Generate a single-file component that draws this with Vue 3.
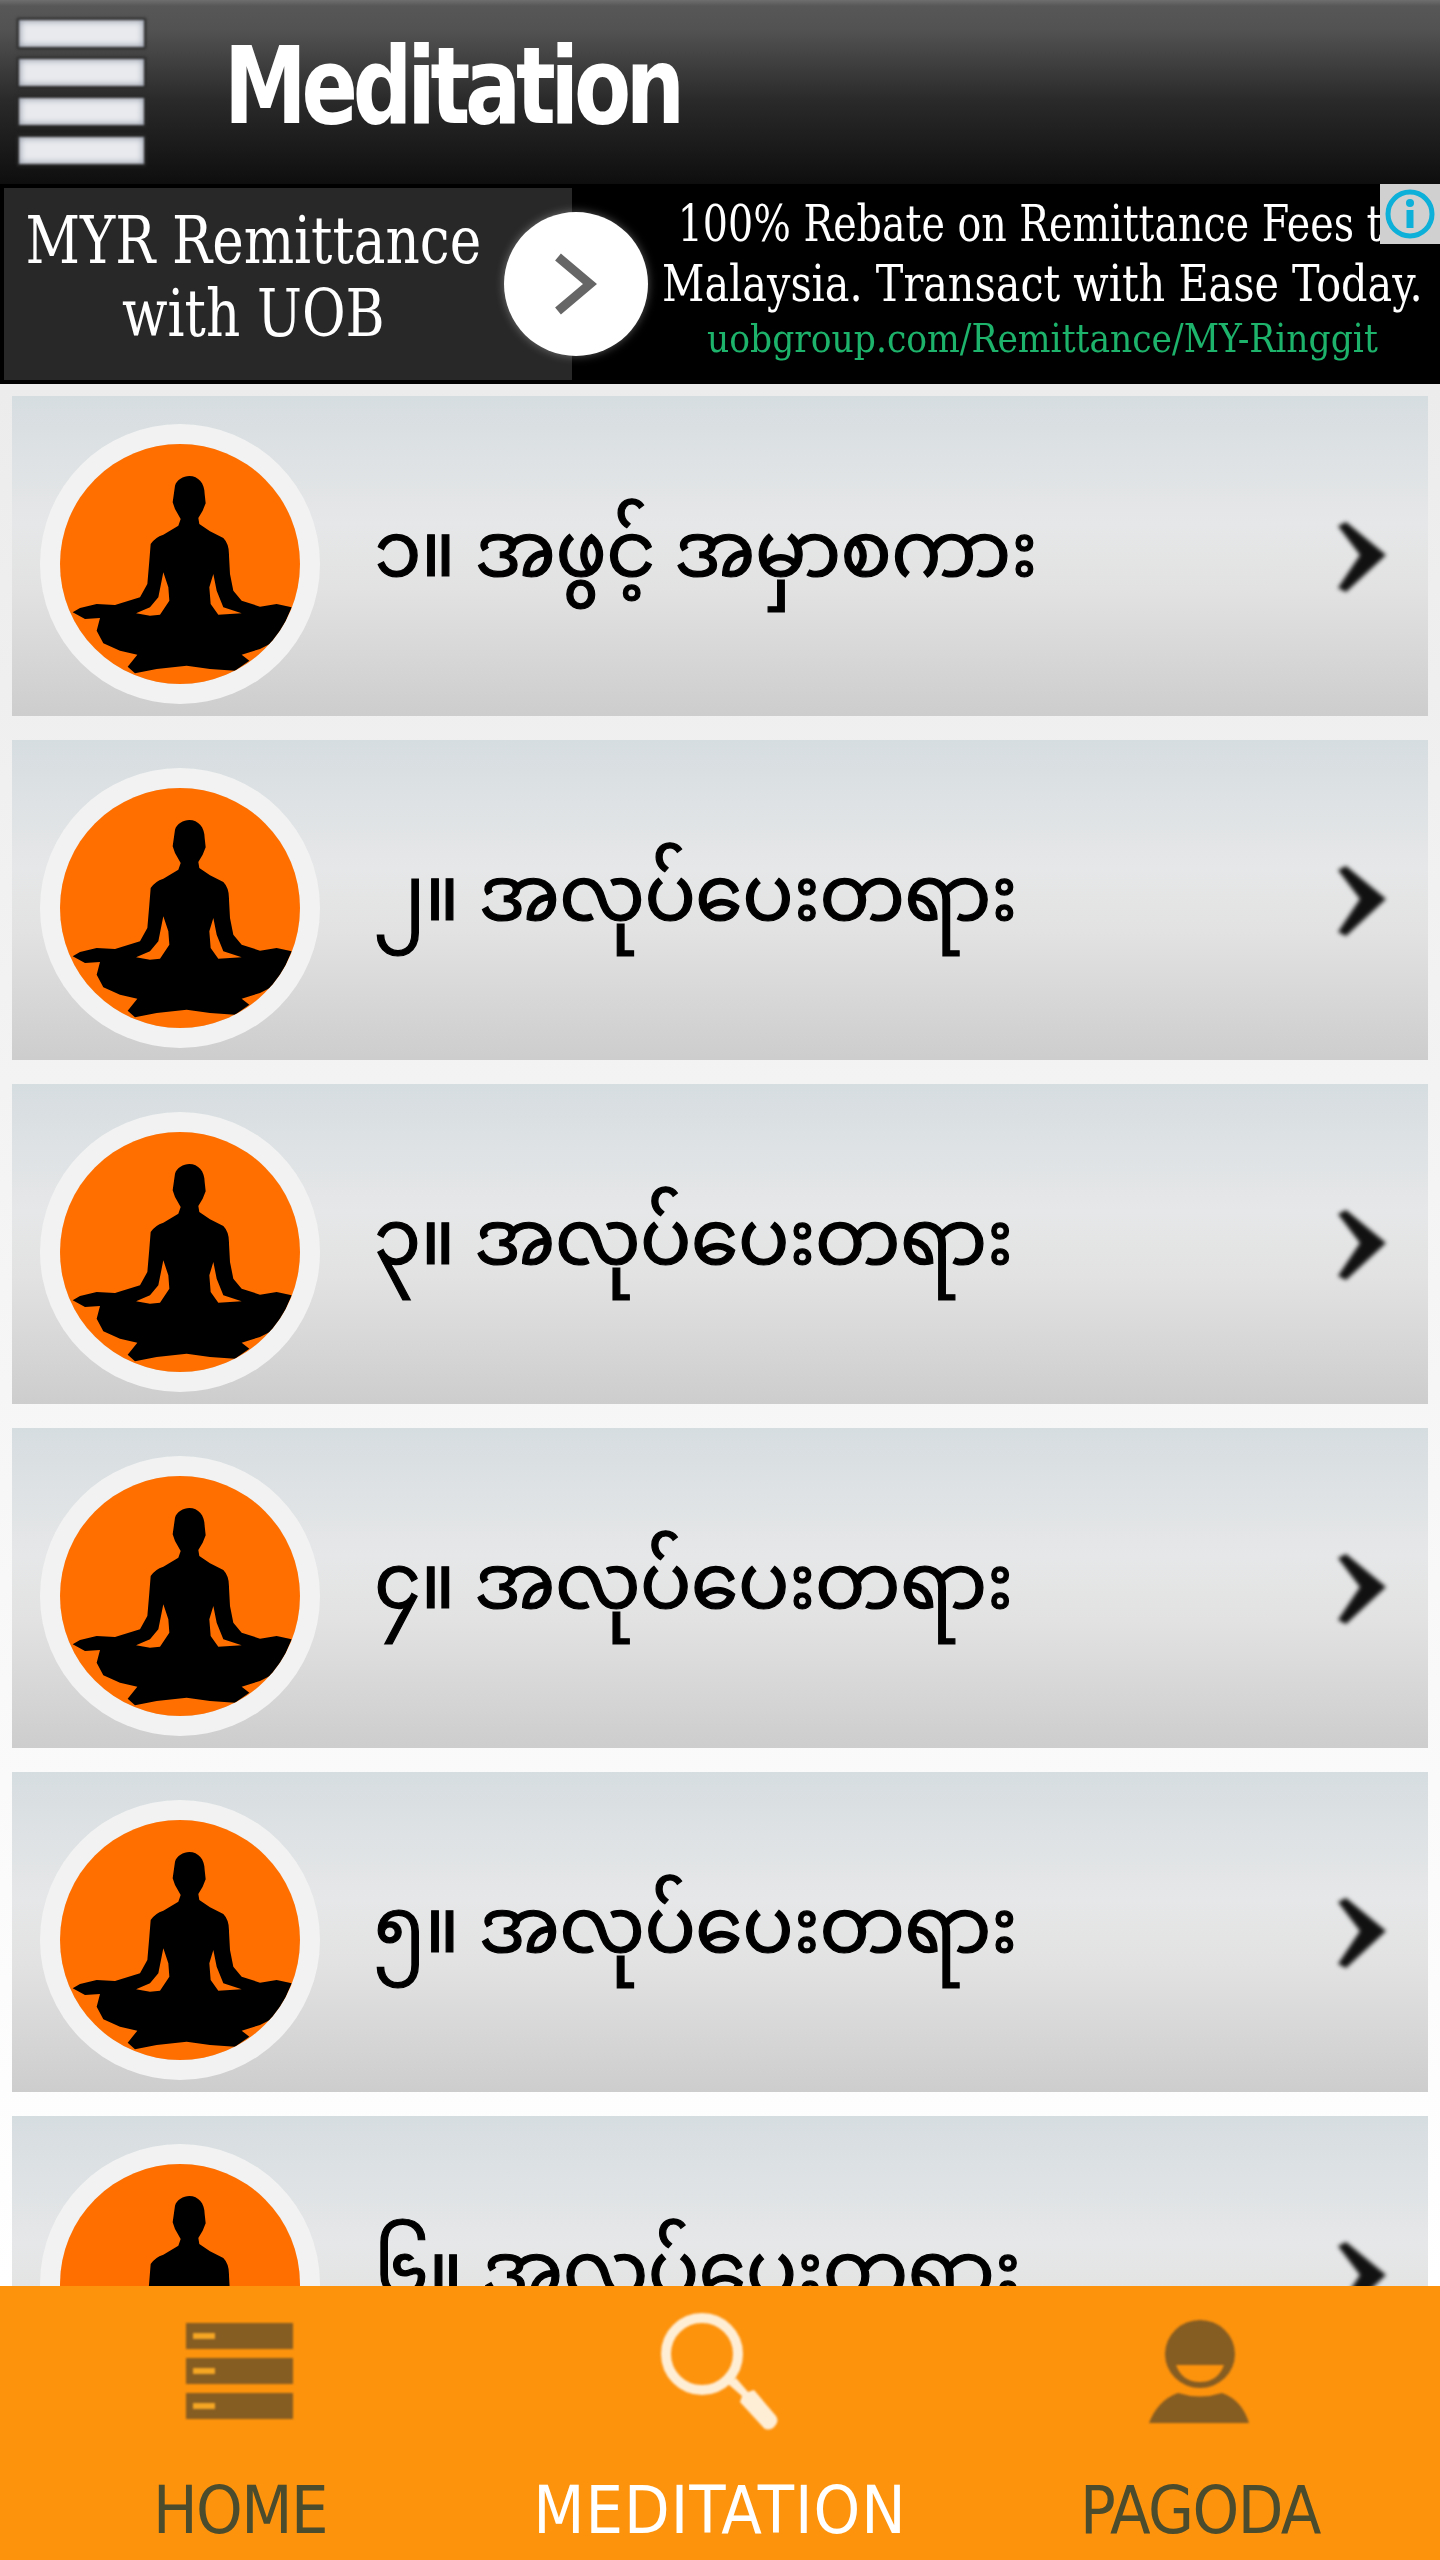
<template>
  <div class="screen">
    <header class="topbar">
      <div class="burger">
        <span v-for="n in 4" :key="n" class="burger-bar"></span>
      </div>
      <h1 class="title">Meditation</h1>
    </header>

    <div class="ad">
      <div class="ad-left">
        <div class="ad-head">MYR Remittance</div>
        <div class="ad-head">with UOB</div>
      </div>
      <div class="ad-right">
        <div class="ad-line first">100% Rebate on Remittance Fees to</div>
        <div class="ad-line">Malaysia. Transact with Ease Today.</div>
        <div class="ad-url">uobgroup.com/Remittance/MY-Ringgit</div>
      </div>
      <div class="ad-go">
        <svg width="48" height="64" viewBox="0 0 48 64">
          <path d="M6 5 L38 32 L6 59" fill="none" stroke="#666" stroke-width="9" />
        </svg>
      </div>
      <div class="ad-info">
        <svg width="52" height="52" viewBox="0 0 52 52">
          <circle cx="26" cy="26" r="22" fill="none" stroke="#0cb0d8" stroke-width="5" />
          <circle cx="26" cy="15" r="4" fill="#0cb0d8" />
          <rect x="22.5" y="22" width="7" height="18" fill="#0cb0d8" />
        </svg>
      </div>
    </div>

    <main class="list">
      <div v-for="row in rows" :key="row" class="row">
        <div class="avatar">
          <svg class="figure" width="240" height="240" viewBox="0 0 720 720">
            <rect width="720" height="720" fill="#ff6f00" />
            <path fill="#000" fill-rule="evenodd" :d="figurePath" />
          </svg>
        </div>
        <div class="row-text">{{ row }}</div>
        <svg class="chevron" width="56" height="76" viewBox="0 0 56 76">
          <path d="M4 8 L12 4 L52 37 L12 74 L4 70 L26 37 Z" fill="#111" />
        </svg>
      </div>
    </main>

    <nav class="tabs">
      <div class="tab">
        <svg class="tab-icon" width="160" height="120" viewBox="0 0 160 120">
          <g v-for="y in [13, 48, 83]" :key="y">
            <rect x="26" :y="y" width="107" height="26" fill="#855c22" />
            <rect x="33" :y="y + 10" width="22" height="6" fill="#f5a623" />
          </g>
        </svg>
        <span class="tab-label">HOME</span>
      </div>
      <div class="tab active">
        <svg class="tab-icon" width="160" height="120" viewBox="0 0 160 120">
          <circle cx="62" cy="44" r="36" fill="none" stroke="#ffeed6" stroke-width="10" />
          <path d="M88 74 L96 68 L108 82 L114 80 L136 106 Q140 112 133 118 Q126 122 122 116 L100 92 L102 86 Z" fill="#ffeed6" />
        </svg>
        <span class="tab-label">MEDITATION</span>
      </div>
      <div class="tab">
        <svg class="tab-icon" width="160" height="120" viewBox="0 0 160 120">
          <ellipse cx="80" cy="44" rx="35" ry="34" fill="#855c22" />
          <path d="M56 55 L104 55 Q98 72 80 72 Q62 72 56 55 Z" fill="#fd930d" />
          <path d="M29 113 Q38 90 58 83 Q80 90 102 83 Q122 90 129 113 Z" fill="#855c22" />
        </svg>
        <span class="tab-label">PAGODA</span>
      </div>
    </nav>
  </div>
</template>

<script setup>
const rows = [
  '၁။ အဖွင့် အမှာစကား',
  '၂။ အလုပ်ပေးတရား',
  '၃။ အလုပ်ပေးတရား',
  '၄။ အလုပ်ပေးတရား',
  '၅။ အလုပ်ပေးတရား',
  '၆။ အလုပ်ပေးတရား'
]

// traced from the reference at 3x, the figure and the two gaps beside its arms
const figurePath =
  'M388 96 C415 96 434 118 434 150 L437 178 L428 200 L415 222 L418 240 L450 262 L490 282 Q508 300 507 335 L510 390 L520 440 L545 470 L600 488 L650 480 L695 490 L680 525 L670 550 L640 595 L600 615 L545 632 L568 650 L525 680 L450 675 L380 665 L290 675 L225 688 L203 668 L232 632 L180 620 L130 598 L110 560 L120 522 L75 525 L38 505 L60 492 L110 480 L165 483 L240 460 L262 420 L268 350 L272 300 Q285 280 310 272 L355 245 L362 225 L345 195 L338 175 L345 125 C350 108 370 96 388 96 Z ' +
  'M310 385 L325 430 L328 470 L300 512 L270 515 L228 508 L270 490 L295 460 Z ' +
  'M460 390 L448 430 L452 480 L475 512 L545 508 L490 490 L470 440 Z'
</script>

<style>
html, body {
  margin: 0;
  background: #fff;
}
</style>

<style scoped>
.screen {
  width: 1440px;
  height: 2560px;
  display: flex;
  flex-direction: column;
  overflow: hidden;
  font-family: "DejaVu Sans", sans-serif;
}

.topbar {
  height: 184px;
  flex: none;
  display: flex;
  align-items: center;
  background: linear-gradient(#6e6e6e 0, #575757 6px, #525252 30px, #2a2a2a 100px, #0e0e0e 184px);
}

.burger {
  width: 125px;
  margin-left: 19px;
  display: flex;
  flex-direction: column;
  gap: 12px;
}

.burger-bar {
  height: 27px;
  background: #e8eaee;
  box-shadow: inset 0 0 6px 1px #8d93a0, 0 0 2px 2px #2a2a2a;
  filter: blur(1.2px);
}

.title {
  margin: 0 0 12px 80px;
  font-size: 107px;
  font-weight: 700;
  font-stretch: condensed;
  letter-spacing: -6px;
  color: #fff;
  line-height: 1;
  transform: scaleX(0.864);
  transform-origin: left center;
}

.ad {
  position: relative;
  height: 200px;
  flex: none;
  display: flex;
  background: #000;
  font-family: "DejaVu Serif", serif;
  font-stretch: condensed;
  color: #fff;
}

.ad-left {
  width: 568px;
  margin: 4px 0 4px 4px;
  padding: 16px 70px 0 0;
  box-sizing: border-box;
  background: #282828;
  display: flex;
  flex-direction: column;
  align-items: center;
}

.ad-head {
  font-size: 65px;
  line-height: 73px;
  white-space: nowrap;
  transform: scaleX(0.91);
}

.ad-right {
  width: 868px;
  padding: 10px 0 0 72px;
  box-sizing: border-box;
  display: flex;
  flex-direction: column;
  align-items: center;
  white-space: nowrap;
}

.ad-line {
  font-size: 50px;
  line-height: 60px;
  transform: scaleX(0.92);
}

.ad-line.first {
  transform: scaleX(0.88);
}

.ad-url {
  font-size: 40px;
  line-height: 48px;
  color: #1db36b;
  transform: scaleX(0.96);
}

.ad-go {
  position: absolute;
  left: 504px;
  top: 28px;
  width: 144px;
  height: 144px;
  border-radius: 50%;
  background: #fff;
  box-shadow: 0 0 10px rgba(255, 255, 255, 0.35);
  display: flex;
  align-items: center;
  justify-content: center;
}

.ad-info {
  position: absolute;
  right: 0;
  top: 0;
  width: 60px;
  height: 60px;
  background: #d0d0d0;
  display: flex;
  align-items: center;
  justify-content: center;
}

.list {
  flex: 1;
  min-height: 0;
  overflow: hidden;
  padding: 12px 12px 0;
  background: linear-gradient(#ececec, #fff);
  display: flex;
  flex-direction: column;
  gap: 24px;
}

.row {
  height: 320px;
  flex: none;
  display: flex;
  background: linear-gradient(#d6dde0 0, #e6e7e8 40%, #e2e2e2 60%, #cdcdcd 100%);
}

.avatar {
  width: 240px;
  height: 240px;
  flex: none;
  margin: 48px 0 0 48px;
  border-radius: 50%;
  box-shadow: 0 0 0 20px #f2f2f2;
}

.figure {
  display: block;
  border-radius: 50%;
}

.row-text {
  margin: 112px 0 0 74px;
  font-family: "Noto Sans Myanmar", "Padauk", "Myanmar Text", "Noto Sans", sans-serif;
  font-size: 76px;
  line-height: 100px;
  letter-spacing: -0.5px;
  color: #000;
  -webkit-text-stroke: 1.2px #000;
  white-space: nowrap;
}

.chevron {
  margin: 122px 38px 0 auto;
  flex: none;
  filter: blur(2px);
}

.tabs {
  height: 274px;
  flex: none;
  display: grid;
  grid-template-columns: repeat(3, 1fr);
  background: #fd930d;
  position: relative;
}

.tab {
  display: flex;
  flex-direction: column;
  align-items: center;
  padding-top: 24px;
  color: #4b4b2d;
}

.tab.active {
  color: #fff;
}

.tab-icon {
  filter: blur(1px);
}

.tab-label {
  margin-top: 46px;
  font-size: 66px;
  font-stretch: condensed;
  line-height: 70px;
  letter-spacing: -1.5px;
}

.tab.active .tab-label {
  letter-spacing: 1px;
}
</style>
